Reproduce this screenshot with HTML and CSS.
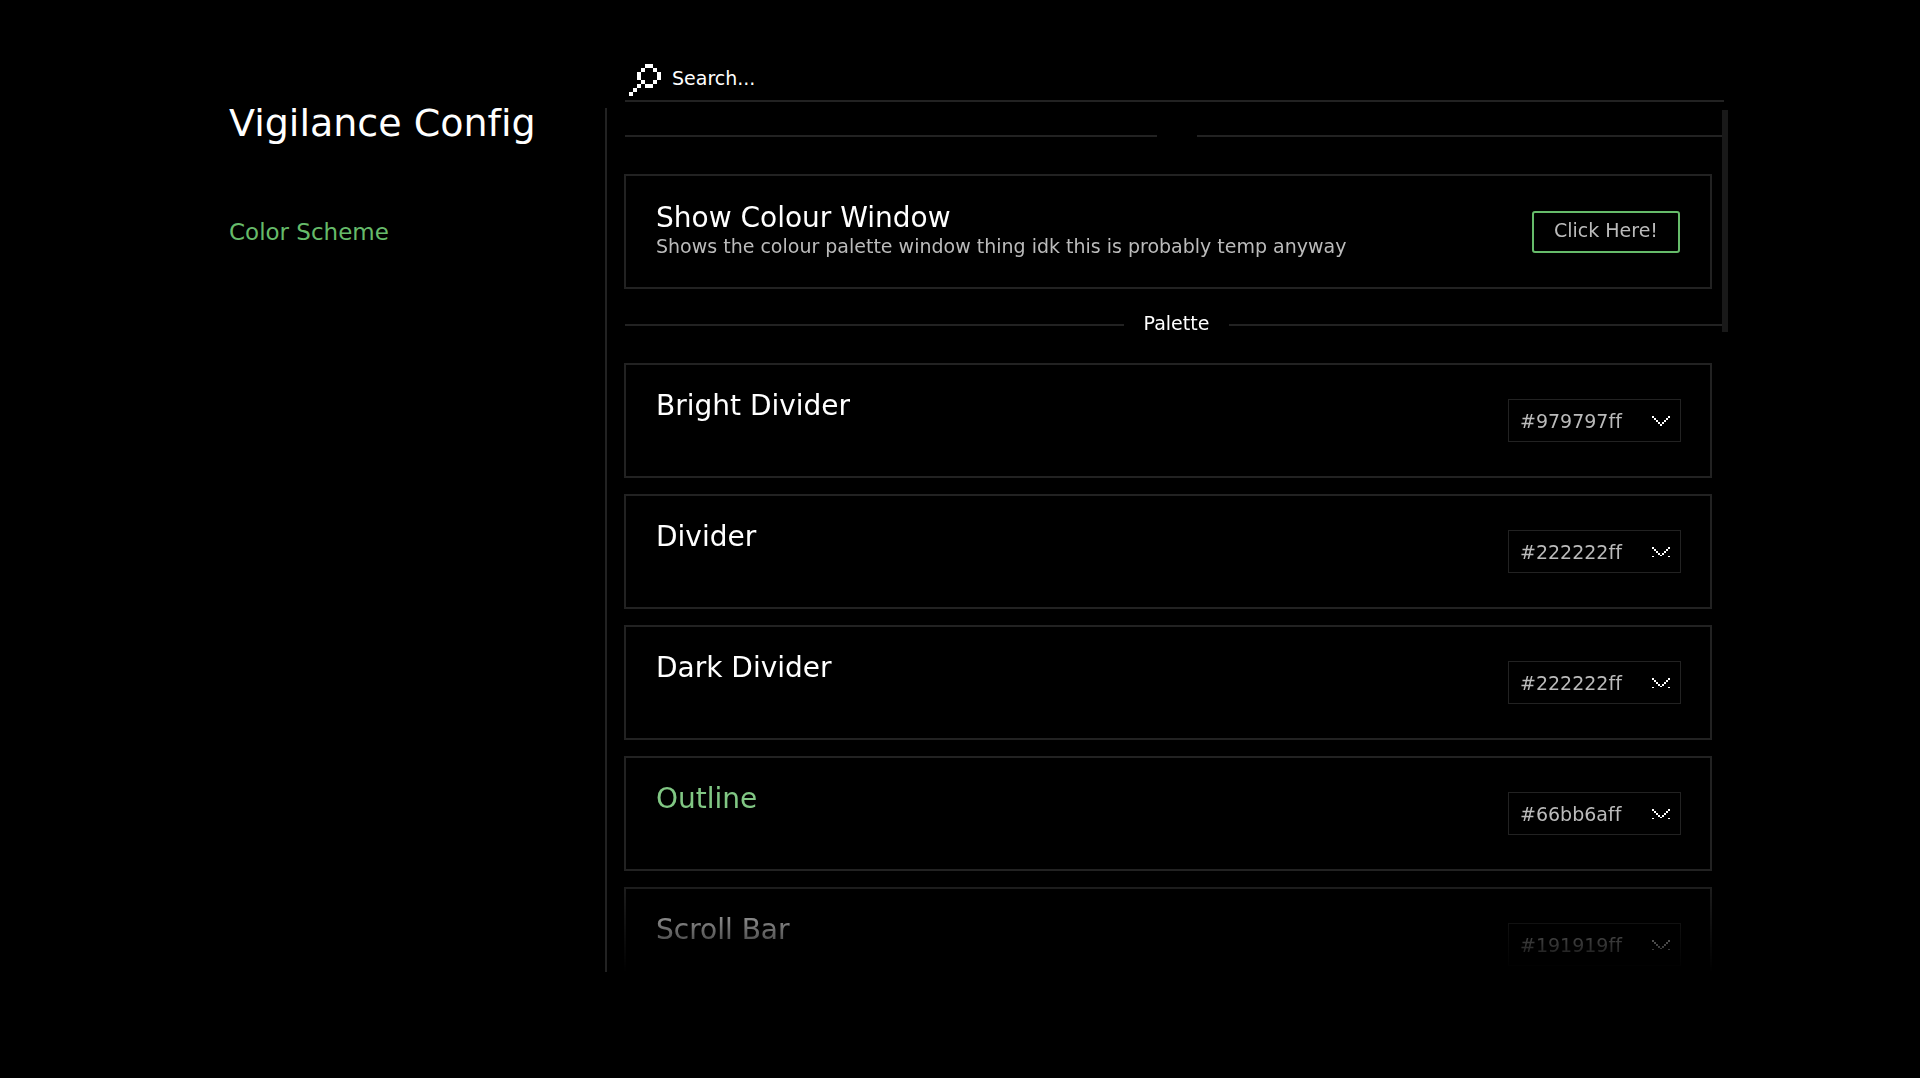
FILE: index.html
```html
<!DOCTYPE html>
<html lang="en">
<head>
<meta charset="utf-8">
<title>Vigilance Config</title>
<link rel="stylesheet" href="styles.css">
</head>
<body>
<svg class="defs" aria-hidden="true">
  <symbol id="chevron" viewBox="0 0 18 10"><path d="M0 0h2v2h-2zM2 2h2v2h-2zM4 4h2v2h-2zM6 6h2v2h-2zM8 8h2v2h-2zM10 6h2v2h-2zM12 4h2v2h-2zM14 2h2v2h-2zM16 0h2v2h-2z"/></symbol>
  <symbol id="chevron-cut" viewBox="0 0 18 10"><path d="M0 0h2v2h-2zM2 2h2v2h-2zM4 4h2v2h-2zM6 6h2v2h-2zM8 8h2v1h-2zM10 6h2v2h-2zM12 4h2v2h-2zM14 2h2v2h-2zM16 0h2v2h-2zM0 9h2v1h-2zM16 9h2v1h-2z"/></symbol>
</svg>
<div class="app">
  <aside class="sidebar">
    <h1 class="title">Vigilance Config</h1>
    <nav><a class="nav-link" href="#color-scheme">Color Scheme</a></nav>
  </aside>
  <main class="content" id="color-scheme">
    <div class="search">
      <svg class="search-icon" viewBox="0 0 8 8" aria-hidden="true"><path d="M4 0h2v1h-2zM3 1h1v1h-1zM6 1h1v1h-1zM2 2h1v2h-1zM7 2h1v2h-1zM3 4h1v1h-1zM6 4h1v1h-1zM2 5h1v1h-1zM4 5h2v1h-2zM1 6h1v1h-1zM0 7h1v1h-1z"/></svg>
      <input class="search-input" type="text" placeholder="Search..." aria-label="Search">
    </div>
    <div class="scroller">
      <div class="list">
        <div class="divider"><span class="divider-label"></span></div>
        <section class="card">
          <div class="card-body">
            <h2 class="card-title">Show Colour Window</h2>
            <p class="card-text">Shows the colour palette window thing idk this is probably temp anyway</p>
          </div>
          <button class="button" type="button">Click Here!</button>
        </section>
        <div class="divider"><span class="divider-label">Palette</span></div>
        <section class="card">
          <label class="card-title" for="c1">Bright Divider</label>
          <div class="picker"><select class="picker-select" id="c1"><option>#979797ff</option></select><svg class="picker-icon"><use href="#chevron"/></svg></div>
        </section>
        <section class="card">
          <label class="card-title" for="c2">Divider</label>
          <div class="picker"><select class="picker-select" id="c2"><option>#222222ff</option></select><svg class="picker-icon"><use href="#chevron-cut"/></svg></div>
        </section>
        <section class="card">
          <label class="card-title" for="c3">Dark Divider</label>
          <div class="picker"><select class="picker-select" id="c3"><option>#222222ff</option></select><svg class="picker-icon"><use href="#chevron-cut"/></svg></div>
        </section>
        <section class="card">
          <label class="card-title card-title-active" for="c4">Outline</label>
          <div class="picker"><select class="picker-select" id="c4"><option>#66bb6aff</option></select><svg class="picker-icon"><use href="#chevron-cut"/></svg></div>
        </section>
        <section class="card">
          <label class="card-title" for="c5">Scroll Bar</label>
          <div class="picker"><select class="picker-select" id="c5"><option>#191919ff</option></select><svg class="picker-icon"><use href="#chevron-cut"/></svg></div>
        </section>
      </div>
      <div class="scrollbar"></div>
    </div>
  </main>
</div>
</body>
</html>
```
FILE: styles.css
```css
* { box-sizing: border-box; margin: 0; }
body { background: #000; color: #fff; font: 19px/24px "DejaVu Sans", sans-serif; font-variant-ligatures: none; }
svg { shape-rendering: crispEdges; }
.defs { display: none; }
.app { display: flex; height: 100vh; padding: 60px 192px 106px 229px; }

.sidebar { flex: 0 0 378px; margin-top: 48px; border-right: 2px solid #222; }
.title { margin-bottom: 80px; font-size: 38px; line-height: 30px; font-weight: 400; }
.nav-link { color: #66bb6a; font-size: 23px; line-height: 28px; text-decoration: none; }

.content { display: flex; flex: 1; flex-direction: column; min-width: 0; padding-left: 17px; }
.search { display: flex; flex: 0 0 42px; gap: 11px; align-items: center; margin: 0 4px 0 1px; padding: 0 4px; border-bottom: 2px solid #222; }
.search-icon { flex: none; width: 32px; height: 32px; fill: #fff; }
.search-input { flex: 1; padding: 0 0 4px; border: 0; outline: 0; background: none; color: #fff; font: inherit; }
.search-input::placeholder { color: #fff; opacity: 1; }

/* The list fades out over its last 100px */
.scroller {
  display: grid; flex: 1; min-height: 0; margin-top: 6px; overflow: hidden;
  mask-image: linear-gradient(to top, transparent, #000 100px);
}
.list { grid-area: 1 / 1; padding-top: 4px; }
.scrollbar { grid-area: 1 / 1; justify-self: end; width: 6px; height: 222px; margin-top: 2px; background: #191919; }

.divider { display: flex; gap: 20px; align-items: center; height: 48px; margin: 0 0 14px 1px; }
.divider::before, .divider::after { content: ""; flex: 1; height: 2px; background: #222; }
.divider-label { padding-bottom: 4px; }

.card {
  display: flex; align-items: center; justify-content: space-between;
  height: 115px; margin: 0 16px 16px 0; padding: 0 29px 0 30px; border: 2px solid #222;
}
.card + .divider { margin-top: -4px; }
.card-body { padding-bottom: 4px; }
.card-title { display: block; align-self: flex-start; font-size: 28px; line-height: 32px; font-weight: 400; }
.card > .card-title { padding-top: 25px; }
.card-title-active { color: #81c784; }
.card-text { color: #bbb; line-height: 24px; }
.button { width: 148px; height: 42px; margin-right: 1px; padding: 0 0 4px; border: 2px solid #66bb6a; border-radius: 3px; background: none; color: #bbb; font: inherit; }

.picker { display: grid; align-items: center; }
.picker-select { grid-area: 1 / 1; width: 173px; height: 43px; padding: 0 11px; border: 1px solid #222; border-radius: 0; appearance: none; background: none; color: #bbb; font: inherit; font-variant-ligatures: none; }
.picker-icon { grid-area: 1 / 1; justify-self: end; width: 18px; height: 10px; margin-right: 11px; fill: #fff; pointer-events: none; }
```
